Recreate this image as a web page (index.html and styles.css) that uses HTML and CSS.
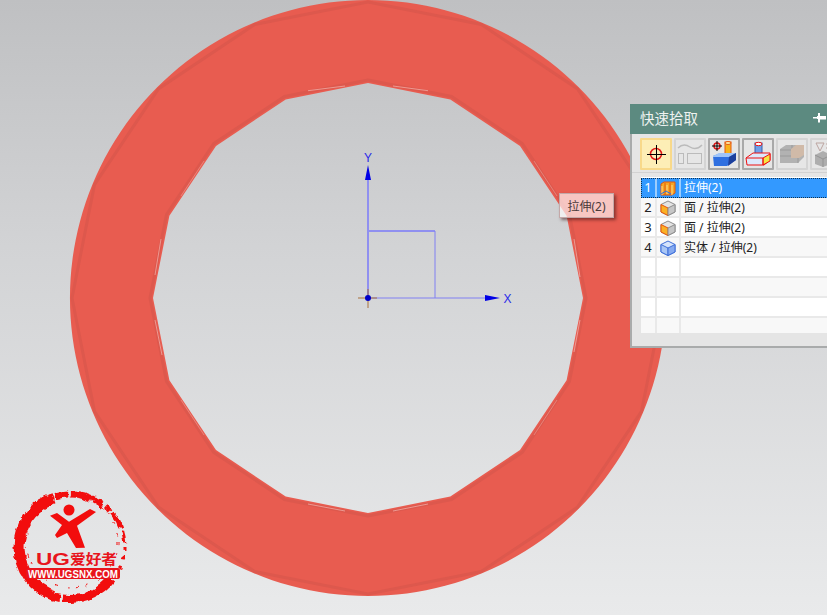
FILE: index.html
```html
<!DOCTYPE html>
<html lang="zh">
<head>
<meta charset="utf-8">
<title>快速拾取</title>
<link rel="stylesheet" href="styles.css">
</head>
<body>
<main class="viewport">
  <svg class="scene" width="827" height="615" viewBox="0 0 827 615">
    <path class="ring" fill-rule="evenodd" d="M368 0A298 298 0 1 1 367.900 0ZM368 83L450.300 99.400L520 146L566.600 215.700L583 298L566.600 380.300L520 450L450.300 496.600L368 513L285.700 496.600L216 450L169.400 380.300L153 298L169.400 215.700L216 146L285.700 99.400Z"/>
    <polygon class="band-outer" points="368,2 481.300,24.500 577.300,88.700 641.500,184.700 664,298 641.500,411.300 577.300,507.300 481.300,571.500 368,594 254.700,571.500 158.700,507.300 94.500,411.300 72,298 94.500,184.700 158.700,88.700 254.700,24.500"/>
    <polygon class="band-inner" points="368,80 451.500,96.500 522.300,143.700 569.500,214.500 586,298 569.500,381.500 522.300,452.300 451.500,499.500 368,516 284.500,499.500 213.700,452.300 166.500,381.500 150,298 166.500,214.500 213.700,143.700 284.500,96.500"/>
    <path class="glint" d="M308 90.700L345 86M393 86L428 90.700M308 504L345 511M393 511L428 504M161 239L155 275M155 320L162 355M574 239L580 277M580 320L574 352"/>
    <path class="glint faint" d="M534 161L557 196M204 161L181 196M534 435L557 400M204 435L181 400"/>

    <path class="axis thick" d="M368 175V298M368 231H435"/>
    <path class="axis" d="M368 298H486M435 231V298"/>
    <path class="arrow" d="M368 165L371 180H365ZM500 298L485 295V301Z"/>
    <text class="axis-label" x="364" y="162">Y</text>
    <text class="axis-label" x="503.500" y="303">X</text>
    <path class="origin-cross" d="M358 298H377M368 289V308"/>
    <circle class="origin-dot" cx="368" cy="298" r="3"/>
  </svg>

  <svg class="logo" width="140" height="135" viewBox="0 480 140 135">
    <defs>
      <filter id="rough" x="-10%" y="-10%" width="120%" height="120%">
        <feTurbulence type="fractalNoise" baseFrequency="0.16" numOctaves="2" seed="4"/>
        <feDisplacementMap in="SourceGraphic" scale="5" xChannelSelector="R" yChannelSelector="G"/>
      </filter>
    </defs>
    <g class="brushes">
      <circle class="brush w11" cx="70" cy="547" r="51" pathLength="360" stroke-dasharray="142 218" stroke-dashoffset="-108"/>
      <circle class="brush w8" cx="70" cy="547" r="52" pathLength="360" stroke-dasharray="60 3 28 269" stroke-dashoffset="-38"/>
      <circle class="brush w7" cx="70" cy="547" r="53" pathLength="360" stroke-dasharray="30 2 14 3 22 4 10 275" stroke-dashoffset="-222"/>
      <circle class="brush w4" cx="70" cy="547" r="54" pathLength="360" stroke-dasharray="14 2 20 3 8 2 18 293" stroke-dashoffset="-272"/>
      <circle class="brush w3" cx="70" cy="547" r="55" pathLength="360" stroke-dasharray="8 3 12 5 3 5 6 6 3 309" stroke-dashoffset="-332"/>
      <circle class="brush-gap" cx="72" cy="542" r="46" pathLength="360" stroke-dasharray="4 9 2 14 4 7"/>
    </g>
    <circle class="head" cx="69" cy="510" r="5.500"/>
    <polygon class="head" points="50,515.700 57,513 69,521.700 90,509 96,512 77,525.700 85,547.700 76,548 67,533 57,538 55,535 62,525"/>
    <text class="logo-title" x="36" y="565" textLength="34" lengthAdjust="spacingAndGlyphs">UG</text>
    <text class="logo-title cjk" x="70" y="564" textLength="47" lengthAdjust="spacingAndGlyphs">爱好者</text>
    <rect class="logo-band" x="26" y="568" width="94" height="11" rx="2"/>
    <text class="logo-url" x="28" y="577.500" textLength="90" lengthAdjust="spacingAndGlyphs">WWW.UGSNX.COM</text>
  </svg>

  <div class="tooltip">拉伸(2)</div>

  <section class="dialog">
    <header class="dialog-title">
      <span>快速拾取</span>
      <svg class="pin" width="13" height="10" viewBox="0 0 13 10"><path d="M0 4H4V3H5V0H7V3H13V6.500H7V9.500H5V6H4V5.500H0Z"/></svg>
    </header>
    <div class="toolbar">
      <button class="tool selected">
        <svg width="24" height="24" viewBox="0 0 24 24"><circle class="tg-red" cx="12" cy="12" r="5.500"/><path class="tg-black" d="M12.500 3V22M3 12.500H22"/></svg>
      </button>
      <button class="tool disabled">
        <svg width="26" height="24" viewBox="0 0 26 24"><path class="dim-line" d="M1 6C6 1 10 3 13 5S20 8 25 3"/><rect class="dim-box" x="1.500" y="11.500" width="5" height="10"/><rect class="dim-box" x="10.500" y="11.500" width="14" height="10"/></svg>
      </button>
      <button class="tool">
        <svg width="26" height="26" viewBox="0 0 26 26"><circle class="tg-red" cx="6" cy="5" r="3"/><path class="tg-black" d="M6 0V10M1 5H11"/><rect x="14" y="1" width="6" height="12" fill="#f7b21a" stroke="#e65a10"/><ellipse cx="17" cy="2" rx="3" ry="1.500" fill="#ffe9a0" stroke="#e65a10"/><path d="M2 15L10 12H25V19L16 25H3Z" fill="#2f6fe0"/><path d="M2 15L8 12H25L18 16H2Z" fill="#9fc4f7"/><path d="M18 16L25 12V19L17 25Z" fill="#1c3f9c"/></svg>
      </button>
      <button class="tool">
        <svg width="26" height="26" viewBox="0 0 26 26"><rect x="10" y="2" width="7" height="12" fill="#6f9fe8" stroke="#3a5fa8"/><ellipse cx="13.500" cy="3" rx="3.500" ry="1.700" fill="#fff" stroke="#e11"/><path d="M1 17L8 12H25V19L19 24H2Z" fill="#dce8fb" stroke="#e11"/><path d="M18 17L25 13V20L18 24Z" fill="#f5e642" stroke="#e11"/><path d="M1 17H18V24" fill="none" stroke="#e11"/></svg>
      </button>
      <button class="tool disabled">
        <svg width="26" height="22" viewBox="0 0 26 22"><path d="M1 6L7 2H25V14L19 20H1Z" fill="#a9a9a9"/><path d="M1 7H14M1 13H19M13 2V7M19 14V20" stroke="#8f8f8f" fill="none"/><path d="M12 6L17 2H25V12L20 15H12Z" fill="#cdb39e"/></svg>
      </button>
      <button class="tool disabled">
        <svg width="26" height="26" viewBox="0 0 26 26"><path d="M3 2H11L7 10Z" fill="none" stroke="#b59a94"/><path d="M13 3H24M13 7H24" stroke="#b59a94"/><path d="M2 14L10 10L18 14V23L10 26L2 23Z" fill="#a5a5a5"/><path d="M10 18V26M2 14L10 18L18 14" stroke="#858585" fill="none"/></svg>
      </button>
    </div>
    <div class="list">
      <div class="row current"><span class="num">1</span><span class="ico"><svg width="16" height="16" viewBox="0 0 16 16"><path d="M1 4L4 2H15V13L12 15H1Z" fill="#f6a623" stroke="#e0560c"/><path d="M5 3V15M10 3V15" stroke="#e0560c"/><path d="M2 15V6M7 14V5M12 15V5" stroke="#ffd88a"/><path d="M1 14L6 11L11 14" stroke="#2f6fe0" fill="none"/></svg></span><span class="label">拉伸(2)</span></div>
      <div class="row"><span class="num">2</span><span class="ico"><svg width="16" height="16" viewBox="0 0 16 16"><path d="M8 1L15 4.500V12L8 15.500L1 12V4.500Z" fill="#e4e4e4" stroke="#8e8e8e"/><path d="M1 4.500L8 8V15.500L1 12Z" fill="#fbb124" stroke="#e6540c"/><path d="M15 4.500L8 8V15.500L15 12Z" fill="#c6c6c6" stroke="#8e8e8e"/></svg></span><span class="label">面 / 拉伸(2)</span></div>
      <div class="row"><span class="num">3</span><span class="ico"><svg width="16" height="16" viewBox="0 0 16 16"><path d="M8 1L15 4.500V12L8 15.500L1 12V4.500Z" fill="#e4e4e4" stroke="#8e8e8e"/><path d="M1 4.500L8 8V15.500L1 12Z" fill="#fbb124" stroke="#e6540c"/><path d="M15 4.500L8 8V15.500L15 12Z" fill="#c6c6c6" stroke="#8e8e8e"/></svg></span><span class="label">面 / 拉伸(2)</span></div>
      <div class="row"><span class="num">4</span><span class="ico"><svg width="16" height="16" viewBox="0 0 16 16"><path d="M8 1L15 4.500V12L8 15.500L1 12V4.500Z" fill="#d6e4fb" stroke="#3f6fd8"/><path d="M1 4.500L8 8V15.500L1 12Z" fill="#a9c6f5" stroke="#3f6fd8"/><path d="M15 4.500L8 8V15.500L15 12Z" fill="#86aaf0" stroke="#3f6fd8"/></svg></span><span class="label">实体 / 拉伸(2)</span></div>
      <div class="row"><span class="num"></span><span class="ico"></span><span class="label"></span></div>
      <div class="row"><span class="num"></span><span class="ico"></span><span class="label"></span></div>
      <div class="row"><span class="num"></span><span class="ico"></span><span class="label"></span></div>
      <div class="row"><span class="num"></span><span class="ico"></span><span class="label"></span></div>
    </div>
  </section>
</main>
</body>
</html>
```

FILE: styles.css
```css
* { box-sizing: border-box; }

html, body {
  margin: 0;
  height: 100%;
  overflow: hidden;
}

body {
  font-family: "Noto Sans", "Noto Sans CJK SC", sans-serif;
}

.viewport {
  position: relative;
  width: 827px;
  height: 615px;
  overflow: hidden;
  background: linear-gradient(180deg, #bfc0c2 0%, #d2d3d5 40%, #e9eaeb 100%);
}

.scene { position: absolute; left: 0; top: 0; display: block; }

.ring { fill: #e85c50; }
.band-outer { fill: none; stroke: #dd584d; stroke-width: 3; }
.band-inner { fill: none; stroke: #dd584d; stroke-width: 3; }
.glint { fill: none; stroke: #f2b4ae; stroke-width: 1; opacity: .7; }
.glint.faint { opacity: .45; }

.axis { fill: none; stroke: #8080f2; stroke-width: 1; }
.axis.thick { stroke: #9090f0; stroke-width: 2; }
.arrow { fill: #0000e6; }
.axis-label {
  font-family: "Liberation Sans", sans-serif;
  font-size: 12px;
  fill: #2a2ae8;
}
.origin-cross { fill: none; stroke: #a8703c; stroke-width: 1; }
.origin-dot { fill: #0000c8; }

.logo { position: absolute; left: 0; top: 480px; display: block; }
.brushes { filter: url(#rough); }
.brush { fill: none; stroke: #f20d0d; }
.brush.w11 { stroke-width: 11; }
.brush.w8 { stroke-width: 8; }
.brush.w7 { stroke-width: 7; }
.brush.w4 { stroke-width: 4; }
.brush.w3 { stroke-width: 3; }
.brush-gap { fill: none; stroke: #f20d0d; stroke-width: 1; }
.head { fill: #f20d0d; }
.logo-title {
  font-family: "Liberation Sans", sans-serif;
  font-size: 17px;
  font-weight: 700;
  fill: #e8141c;
}
.logo-title.cjk { font-family: "Noto Sans CJK SC", sans-serif; font-size: 14px; }
.logo-band { fill: #e8141c; }
.logo-url {
  font-family: "Liberation Sans", sans-serif;
  font-size: 10px;
  font-weight: 700;
  fill: #fff;
}

.tooltip {
  position: absolute;
  left: 559px;
  top: 193px;
  width: 55px;
  height: 25px;
  display: flex;
  align-items: center;
  justify-content: center;
  font-size: 12px;
  color: #4a3a3a;
  background: rgba(255, 255, 255, .65);
  border: 1px solid #c4a8a8;
  box-shadow: 2px 2px 3px rgba(60, 20, 20, .55);
}

.dialog {
  position: absolute;
  left: 630px;
  top: 104px;
  width: 240px;
  height: 244px;
  display: flex;
  flex-direction: column;
  background: #e5e5e5;
  border-left: 2px solid #a9abab;
  border-bottom: 2px solid #a9abab;
}

.dialog-title {
  flex: none;
  height: 30px;
  margin-left: -2px;
  padding: 0 0 4px 10px;
  display: flex;
  align-items: center;
  gap: 115px;
  background: #5c8a80;
  color: #eef2f0;
  font-size: 14.500px;
}

.pin { display: block; fill: #fff; margin-top: 1px; }

.toolbar {
  flex: none;
  margin-top: 4px;
  padding: 0 0 2px 8px;
  display: flex;
  gap: 2px;
  height: 35px;
  border-bottom: 1px solid #d2d2d2;
}

.tool {
  flex: none;
  width: 32px;
  height: 32px;
  padding: 0;
  display: flex;
  align-items: center;
  justify-content: center;
  background: #e6e6e6;
  border: 2px solid #a9a9a9;
  border-radius: 1px;
}
.tool.selected { background: #fdeeb6; border-color: #f8d98a; }
.tool.disabled { border-color: #d4d4d4; }
.tool.disabled svg { opacity: .85; }

.tg-red { fill: none; stroke: #e01818; stroke-width: 1.500; }
.tg-black { fill: none; stroke: #000; stroke-width: 1; }
.dim-line { fill: none; stroke: #b4b4b4; stroke-width: 1.500; }
.dim-box { fill: none; stroke: #b4b4b4; }

.list {
  flex: none;
  margin: 4px 0 0 9px;
  height: 156px;
  overflow: hidden;
  background: #fff;
  padding-top: 1px;
}

.row {
  display: grid;
  grid-template-columns: 16px 24px 1fr;
  height: 20px;
  font-size: 12px;
  line-height: 19px;
  color: #222;
  background: #fff;
  border-bottom: 2px solid #e9e9e9;
}
.row:nth-child(even) { background: #f8f8f8; }

.row > span { display: flex; align-items: center; }

.num {
  justify-content: center;
  font-size: 13px;
  border-right: 2px solid #e9e9e9;
}
.ico {
  justify-content: center;
  border-right: 2px solid #e9e9e9;
}
.label { padding-left: 3px; white-space: pre; }

.row.current {
  background: #3399ff;
  color: #fff;
  border-bottom: 1px dotted #e8902c;
  outline: 1px dotted #10324f;
  outline-offset: -1px;
}
.row.current .num, .row.current .ico { border-right-color: #9ccdfd; }
```
